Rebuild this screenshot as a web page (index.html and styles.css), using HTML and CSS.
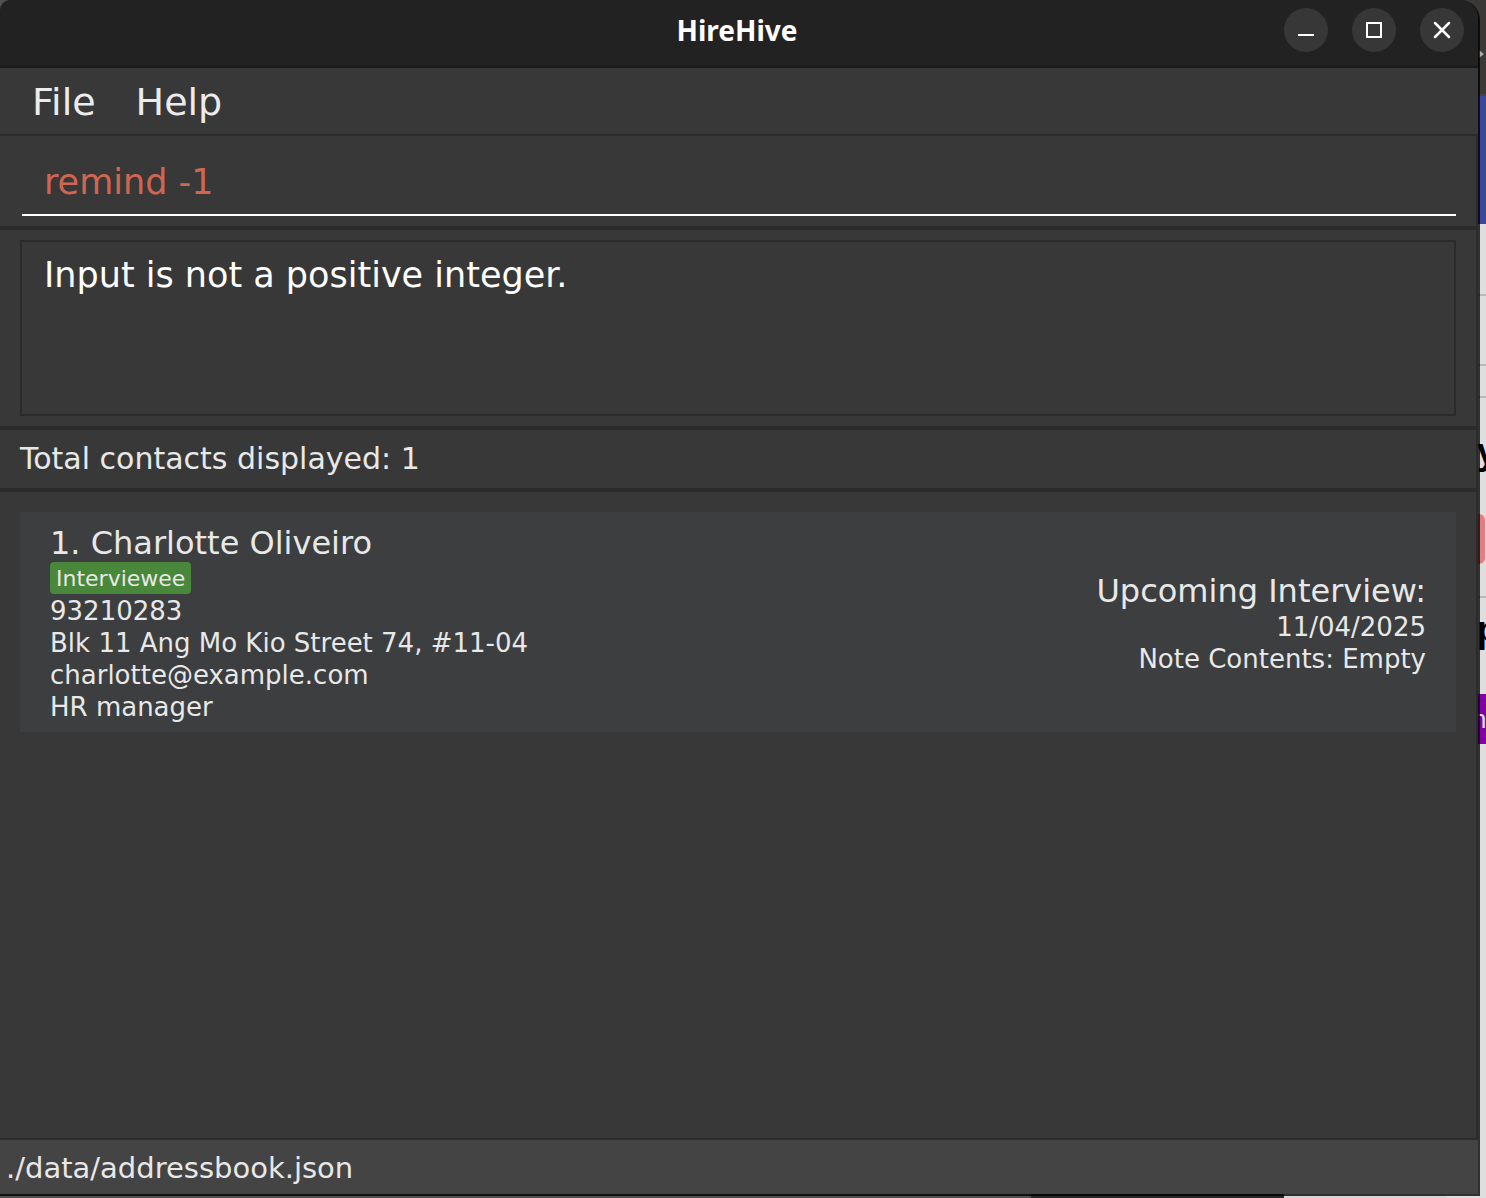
FILE: index.html
```html
<!DOCTYPE html>
<html lang="en">
<head>
<meta charset="utf-8">
<meta name="viewport" content="width=device-width, initial-scale=1">
<title>HireHive</title>
<link rel="stylesheet" href="styles.css">
</head>
<body>
<div class="screen">
  <div class="backdrop" aria-hidden="true">
    <div class="strip">
      <div class="strip-bar"><svg class="strip-arrow" width="8" height="12" viewBox="0 0 8 12"><path d="M3 2l5 4-5 4z"/></svg></div>
      <div class="strip-blue"></div>
      <div class="strip-row row-a"></div>
      <div class="strip-row row-b"></div>
      <div class="strip-row row-c"></div>
      <div class="strip-row row-d"><span class="strip-text">y</span><span class="strip-red"></span></div>
      <div class="strip-last"><span class="strip-text">p</span><span class="strip-purple">n</span></div>
    </div>
  </div>
  <div class="window">
    <header class="titlebar">
      <h1 class="title">HireHive</h1>
      <div class="controls">
        <button class="control" type="button" aria-label="Minimize"><svg width="44" height="44" viewBox="0 0 44 44"><path d="M14 27h16"/></svg></button>
        <button class="control" type="button" aria-label="Maximize"><svg width="44" height="44" viewBox="0 0 44 44"><path d="M15 15h14v14H15z"/></svg></button>
        <button class="control" type="button" aria-label="Close"><svg width="44" height="44" viewBox="0 0 44 44"><path d="M15 15l14 14M29 15L15 29" stroke-width="2.5" stroke-linecap="round"/></svg></button>
      </div>
    </header>
    <nav class="menubar">
      <button class="menu" type="button">File</button>
      <button class="menu" type="button">Help</button>
    </nav>
    <main class="content">
      <form class="command">
        <input class="command-input" type="text" value="remind -1" aria-label="Command" spellcheck="false">
      </form>
      <section class="result">
        <textarea class="result-text" readonly aria-label="Result">Input is not a positive integer.</textarea>
      </section>
      <p class="total">Total contacts displayed: 1</p>
      <ul class="contacts">
        <li class="card">
          <div class="person">
            <h2 class="heading">1. Charlotte Oliveiro</h2>
            <span class="tag">Interviewee</span>
            <p class="detail">93210283</p>
            <p class="detail">Blk 11 Ang Mo Kio Street 74, #11-04</p>
            <p class="detail">charlotte@example.com</p>
            <p class="detail">HR manager</p>
          </div>
          <div class="interview">
            <h3 class="heading">Upcoming Interview:</h3>
            <p class="detail">11/04/2025</p>
            <p class="detail">Note Contents: Empty</p>
          </div>
        </li>
      </ul>
    </main>
    <footer class="status">./data/addressbook.json</footer>
  </div>
</div>
</body>
</html>
```
FILE: styles.css
```css
* {
  box-sizing: border-box;
}

body {
  margin: 0;
  color: #e8e8e8;
  font-family: "DejaVu Sans", sans-serif;
}

h1, h2, h3, p, ul {
  margin: 0;
  padding: 0;
  font-weight: 400;
}

button, input, textarea {
  font-family: inherit;
  border: 0;
  border-radius: 0;
  outline: 0;
  background: none;
}

.screen {
  display: grid;
  grid-template-columns: minmax(0, 1fr);
  min-height: 100vh;
}

/* Other windows that show past the edges of this one */
.backdrop {
  grid-area: 1 / 1;
  display: flex;
  justify-content: flex-end;
  background: linear-gradient(90deg, #505050 0 1031px, #2a2728 1031px 1284px, #d4d4d4 1284px);
}

.strip {
  display: flex;
  flex-direction: column;
  width: 100%;
  max-width: 40px;
  overflow: hidden;
  background: #dedede;
  color: #000;
}

.strip-bar {
  height: 96px;
  padding: 48px 0 0 30px;
  background: #3a3938;
  border-bottom: 2px solid #45433f;
}

.strip-arrow {
  display: block;
  fill: #aaa;
}

.strip-blue {
  height: 128px;
  background: #3a479a;
}

.strip-row {
  border-bottom: 2px solid #b9b9b9;
}

.row-a {
  height: 72px;
}

.row-b {
  height: 70px;
}

.row-c {
  height: 32px;
}

.row-d {
  height: 200px;
  padding-top: 30px;
}

.strip-text {
  display: block;
  padding-left: 31px;
  font: 700 36px/48px "Liberation Sans", sans-serif;
}

.strip-red {
  display: block;
  width: 39px;
  height: 50px;
  margin-top: 38px;
  border-radius: 6px;
  background: #df7f82;
}

.strip-last {
  padding-top: 8px;
}

.strip-purple {
  display: block;
  height: 50px;
  margin-top: 40px;
  padding-left: 26px;
  background: #8100a8;
  color: #ddd;
  font: 26px/50px "Liberation Sans", sans-serif;
}

.window {
  grid-area: 1 / 1;
  z-index: 1;
  display: flex;
  flex-direction: column;
  margin: 0 6px 2px 0;
  border: solid rgba(0, 0, 0, 0.78);
  border-width: 0 2px 2px 0;
  border-radius: 10px 20px 0 0;
  background: #383838;
  background-clip: padding-box;
}

.titlebar {
  display: grid;
  grid-template-columns: 1fr auto 1fr;
  align-items: center;
  height: 68px;
  padding: 0 14px 6px 10px;
  border-bottom: 2px solid #1a1a1a;
  border-radius: 10px 18px 0 0;
  background: #222;
}

.title {
  grid-column: 2;
  color: #fff;
  font: 700 28px/40px "Noto Sans", sans-serif;
}

.controls {
  display: flex;
  justify-content: flex-end;
  gap: 24px;
}

.control {
  width: 44px;
  height: 44px;
  padding: 0;
  border-radius: 50%;
  background: #373737;
}

.control svg {
  display: block;
  fill: none;
  stroke: #fff;
  stroke-width: 2;
}

.menubar {
  display: flex;
  gap: 40px;
  padding: 2px 32px 0;
  border-bottom: 2px solid #2b2b2b;
}

.menu {
  padding: 0;
  color: #ececec;
  font-size: 38px;
  line-height: 64px;
}

.content {
  flex: 1;
  display: flex;
  flex-direction: column;
  border-right: 2px solid #2b2b2b;
}

.command {
  padding: 20px 20px 10px 22px;
  border-bottom: 4px solid #2b2b2b;
}

.command-input {
  display: block;
  width: 100%;
  height: 60px;
  padding: 0 22px 6px;
  border-bottom: 2px solid #fff;
  color: #d06651;
  font-size: 35px;
}

.result {
  padding: 10px 20px;
  border-bottom: 4px solid #2b2b2b;
}

.result-text {
  display: block;
  width: 100%;
  height: 176px;
  padding: 12px 22px;
  border: 2px solid #2b2b2b;
  color: #fff;
  font-size: 35px;
  line-height: 42px;
  resize: none;
}

.total {
  padding: 0 20px;
  border-bottom: 4px solid #2b2b2b;
  font-size: 30px;
  line-height: 58px;
}

.contacts {
  flex: 1;
  padding: 20px;
  list-style: none;
}

.card {
  display: flex;
  justify-content: space-between;
  align-items: center;
  padding: 12px 30px 10px;
  background: #3c3e3f;
}

.interview {
  text-align: right;
}

.heading {
  font-size: 32px;
  line-height: 38px;
}

.detail {
  padding-top: 2px;
  font-size: 26px;
  line-height: 30px;
}

.tag {
  display: block;
  width: fit-content;
  padding: 2px 6px 0;
  border-radius: 4px;
  background: #49873a;
  font-size: 22px;
  line-height: 30px;
}

.status {
  padding: 2px 6px 0;
  border-top: 2px solid #2b2b2b;
  background: #444;
  font-size: 29px;
  line-height: 52px;
}
```
